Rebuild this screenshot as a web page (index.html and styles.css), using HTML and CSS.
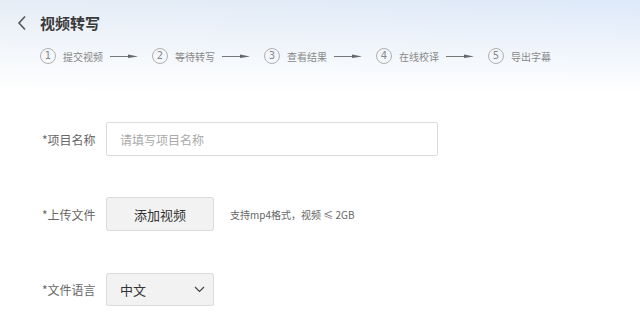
FILE: index.html
```html
<!DOCTYPE html>
<html lang="zh">
<head>
<meta charset="utf-8">
<title>视频转写</title>
<link rel="stylesheet" href="styles.css">
</head>
<body>
<div class="page">
  <div class="header">
    <svg class="back" width="10" height="16" viewBox="0 0 10 16"><path d="M8 1.5 L2 8 L8 14.5" fill="none" stroke="#555" stroke-width="1.6"/></svg>
    <h1 class="title">视频转写</h1>
  </div>
  <div class="steps">
    <div class="step"><span class="num">1</span><span class="label">提交视频</span></div>
    <svg class="arrow" width="28" height="6" viewBox="0 0 28 6"><path d="M0 3.5 H20" stroke="#777" stroke-width="1"/><path d="M18 1.5 L28 3.5 L18 5 Z" fill="#666"/></svg>
    <div class="step"><span class="num">2</span><span class="label">等待转写</span></div>
    <svg class="arrow" width="28" height="6" viewBox="0 0 28 6"><path d="M0 3.5 H20" stroke="#777" stroke-width="1"/><path d="M18 1.5 L28 3.5 L18 5 Z" fill="#666"/></svg>
    <div class="step"><span class="num">3</span><span class="label">查看结果</span></div>
    <svg class="arrow" width="28" height="6" viewBox="0 0 28 6"><path d="M0 3.5 H20" stroke="#777" stroke-width="1"/><path d="M18 1.5 L28 3.5 L18 5 Z" fill="#666"/></svg>
    <div class="step"><span class="num">4</span><span class="label">在线校译</span></div>
    <svg class="arrow" width="28" height="6" viewBox="0 0 28 6"><path d="M0 3.5 H20" stroke="#777" stroke-width="1"/><path d="M18 1.5 L28 3.5 L18 5 Z" fill="#666"/></svg>
    <div class="step"><span class="num">5</span><span class="label">导出字幕</span></div>
  </div>
  <div class="form">
    <div class="row">
      <span class="field-label">*项目名称</span>
      <div class="input"><span class="placeholder">请填写项目名称</span></div>
    </div>
    <div class="row">
      <span class="field-label">*上传文件</span>
      <div class="btn">添加视频</div>
      <span class="hint">支持mp4格式，视频 ≤ 2GB</span>
    </div>
    <div class="row">
      <span class="field-label">*文件语言</span>
      <div class="select"><span>中文</span>
        <svg width="11" height="7" viewBox="0 0 11 7"><path d="M1 1 L5.5 5.5 L10 1" fill="none" stroke="#444" stroke-width="1.2"/></svg>
      </div>
    </div>
  </div>
</div>
</body>
</html>
```

FILE: styles.css
```css
html, body {
  margin: 0;
  padding: 0;
  background: #fff;
}
.page {
  width: 640px;
  height: 319px;
  overflow: hidden;
  font-family: "Noto Sans CJK SC", "Noto Sans", sans-serif;
  background:
    linear-gradient(180deg, rgba(255,255,255,0) 0px, #ffffff 92px),
    linear-gradient(90deg, #e6edf6 0%, #dde9f9 100%);
  background-repeat: no-repeat;
  background-size: 100% 100%, 100% 92px;
}
.header {
  display: flex;
  align-items: center;
  height: 46px;
  padding-left: 17px;
}
.back {
  display: block;
  margin-right: 13px;
  margin-top: -1px;
}
.title {
  margin: 0;
  font-size: 15px;
  font-weight: bold;
  color: #3a3a3a;
  line-height: 20px;
}
.steps {
  display: flex;
  align-items: center;
  padding-left: 40px;
  height: 20px;
}
.step {
  display: flex;
  align-items: center;
}
.num {
  width: 14px;
  height: 14px;
  border: 1px solid #b0b0b0;
  border-radius: 50%;
  font-size: 10px;
  line-height: 14px;
  text-align: center;
  color: #888;
  font-family: "DejaVu Sans", sans-serif;
  margin-right: 7px;
}
.label {
  font-size: 10px;
  color: #888;
  width: 40px;
  white-space: nowrap;
}
.arrow {
  display: block;
  margin: 0 14px 0 7px;
}
.form {
  padding-left: 42px;
  padding-top: 56px;
  display: flex;
  flex-direction: column;
  gap: 41px;
}
.row {
  display: flex;
  align-items: center;
  height: 34px;
}
.field-label {
  width: 64px;
  font-size: 12px;
  color: #666;
}
.input {
  box-sizing: border-box;
  width: 332px;
  height: 34px;
  border: 1px solid #dcdcdc;
  border-radius: 2px;
  background: #fff;
  display: flex;
  align-items: center;
  padding-left: 13px;
}
.placeholder {
  font-size: 12px;
  color: #aaa;
}
.btn {
  box-sizing: border-box;
  width: 108px;
  height: 34px;
  border: 1px solid #dcdcdc;
  border-radius: 2px;
  background: #f2f2f2;
  display: flex;
  align-items: center;
  justify-content: center;
  font-size: 13px;
  color: #333;
}
.hint {
  margin-left: 16px;
  font-size: 10px;
  color: #666;
}
.select {
  box-sizing: border-box;
  width: 108px;
  height: 33px;
  border: 1px solid #dcdcdc;
  border-radius: 2px;
  background: #f2f2f2;
  display: flex;
  align-items: center;
  justify-content: space-between;
  padding: 0 8px 0 13px;
  font-size: 13px;
  color: #333;
}
.select svg {
  display: block;
}
```
